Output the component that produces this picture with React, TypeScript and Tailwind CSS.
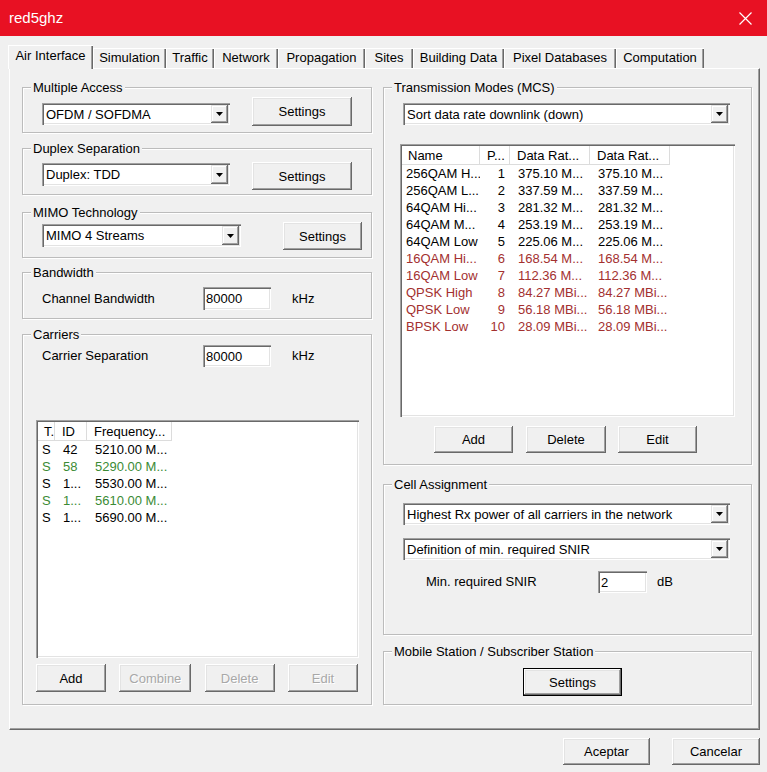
import React from 'react';

const sunken =
  'shadow-[inset_1px_1px_0_#a0a0a0,inset_2px_2px_0_#696969,inset_-1px_-1px_0_#ffffff,inset_-2px_-2px_0_#e3e3e3]';

function Btn({
  children,
  className = '',
  disabled = false,
  isDefault = false,
}: {
  children: React.ReactNode;
  className?: string;
  disabled?: boolean;
  isDefault?: boolean;
}) {
  return (
    <div
      className={`flex shrink-0 items-center justify-center bg-[#f0f0f0] text-[13px] leading-[15px] shadow-[inset_-1px_-1px_0_#696969,inset_1px_1px_0_#ffffff,inset_-2px_-2px_0_#a0a0a0,inset_2px_2px_0_#e3e3e3] ${
        disabled ? 'text-[#a8a8a8] [text-shadow:1px_1px_0_#ffffff]' : 'text-black'
      } ${isDefault ? 'outline outline-black' : ''} ${className}`}
    >
      {children}
    </div>
  );
}

function Combo({ value, className = '' }: { value: string; className?: string }) {
  return (
    <div className={`flex shrink-0 bg-white p-[2px] ${sunken} ${className}`}>
      <div className="flex flex-1 items-center overflow-hidden whitespace-nowrap pl-[2px] text-[13px] leading-[15px]">
        {value}
      </div>
      <div className="flex w-[17px] items-center justify-center bg-[#f0f0f0] shadow-[inset_-1px_-1px_0_#696969,inset_1px_1px_0_#e3e3e3,inset_-2px_-2px_0_#a0a0a0,inset_2px_2px_0_#ffffff]">
        <svg width="7" height="4" viewBox="0 0 7 4">
          <path d="M0 0h7L3.5 4z" fill="#000" />
        </svg>
      </div>
    </div>
  );
}

function Field({ value, className = '' }: { value: string; className?: string }) {
  return (
    <div className={`flex shrink-0 items-center bg-white pl-[3px] text-[13px] leading-[15px] ${sunken} ${className}`}>
      {value}
    </div>
  );
}

function Group({
  label,
  className = '',
  children,
}: {
  label: string;
  className?: string;
  children?: React.ReactNode;
}) {
  return (
    <div
      className={`shrink-0 border border-[#bcbcbc] shadow-[inset_1px_1px_0_#ffffff,1px_1px_0_#ffffff] ${className}`}
    >
      <div className="-mt-[8px] ml-[8px] w-fit bg-[#f0f0f0] px-[2px] text-[13px] leading-[15px]">{label}</div>
      {children}
    </div>
  );
}

type Col = { label: string; w: string; right?: boolean };
type Row = { cells: string[]; color: string };

function ListView({ cols, rows, className = '' }: { cols: Col[]; rows: Row[]; className?: string }) {
  return (
    <div className={`flex flex-col overflow-hidden bg-white p-[2px] ${sunken} ${className}`}>
      <div className="flex h-[19px] shrink-0 text-[13px] leading-[15px]">
        {cols.map((c, i) => (
          <div
            key={i}
            className={`flex h-full items-center overflow-hidden whitespace-nowrap border-r border-b border-[#dcdcdc] ${c.w} ${
              i === 0 ? 'pl-[6px]' : 'pl-[7px]'
            }`}
          >
            {c.label}
          </div>
        ))}
        <div className="h-full flex-1" />
      </div>
      {rows.map((r, ri) => (
        <div key={ri} className={`flex h-[17px] shrink-0 text-[13px] leading-[15px] ${r.color}`}>
          {r.cells.map((t, i) => (
            <div
              key={i}
              className={`flex h-full items-center overflow-hidden whitespace-nowrap ${cols[i].w} ${
                cols[i].right ? 'justify-end pr-[5px]' : i === 0 ? 'pl-[4px]' : 'pl-[8px]'
              }`}
            >
              {t}
            </div>
          ))}
        </div>
      ))}
    </div>
  );
}

const black = 'text-black';
const green = 'text-[#3b8b35]';
const red = 'text-[#a3302f]';

const carrierCols: Col[] = [
  { label: 'T.', w: 'w-[17px]' },
  { label: 'ID', w: 'w-[32px]' },
  { label: 'Frequency...', w: 'w-[85px]' },
];

const carrierRows: Row[] = [
  { cells: ['S', '42', '5210.00 M...'], color: black },
  { cells: ['S', '58', '5290.00 M...'], color: green },
  { cells: ['S', '1...', '5530.00 M...'], color: black },
  { cells: ['S', '1...', '5610.00 M...'], color: green },
  { cells: ['S', '1...', '5690.00 M...'], color: black },
];

const mcsCols: Col[] = [
  { label: 'Name', w: 'w-[78px]' },
  { label: 'P...', w: 'w-[30px]', right: true },
  { label: 'Data Rat...', w: 'w-[80px]' },
  { label: 'Data Rat...', w: 'w-[80px]' },
];

const mcsRows: Row[] = [
  { cells: ['256QAM H...', '1', '375.10 M...', '375.10 M...'], color: black },
  { cells: ['256QAM L...', '2', '337.59 M...', '337.59 M...'], color: black },
  { cells: ['64QAM Hi...', '3', '281.32 M...', '281.32 M...'], color: black },
  { cells: ['64QAM M...', '4', '253.19 M...', '253.19 M...'], color: black },
  { cells: ['64QAM Low', '5', '225.06 M...', '225.06 M...'], color: black },
  { cells: ['16QAM Hi...', '6', '168.54 M...', '168.54 M...'], color: red },
  { cells: ['16QAM Low', '7', '112.36 M...', '112.36 M...'], color: red },
  { cells: ['QPSK High', '8', '84.27 MBi...', '84.27 MBi...'], color: red },
  { cells: ['QPSK Low', '9', '56.18 MBi...', '56.18 MBi...'], color: red },
  { cells: ['BPSK Low', '10', '28.09 MBi...', '28.09 MBi...'], color: red },
];

const tabs = [
  { label: 'Air Interface', w: 'w-[85px]' },
  { label: 'Simulation', w: 'w-[73px]' },
  { label: 'Traffic', w: 'w-[48px]' },
  { label: 'Network', w: 'w-[64px]' },
  { label: 'Propagation', w: 'w-[87px]' },
  { label: 'Sites', w: 'w-[48px]' },
  { label: 'Building Data', w: 'w-[91px]' },
  { label: 'Pixel Databases', w: 'w-[112px]' },
  { label: 'Computation', w: 'w-[88px]' },
];

export default function App() {
  return (
    <div className="flex h-[772px] w-[767px] flex-col overflow-hidden bg-[#f0f0f0] font-['Liberation_Sans',Arial,sans-serif] text-[13px] text-black">
      {/* title bar */}
      <div className="flex h-[36px] shrink-0 items-center justify-between bg-[#e81123] pl-[9px] pr-[15px]">
        <span className="text-[15px] text-white">red5ghz</span>
        <svg width="13" height="13" viewBox="0 0 13 13">
          <path d="M0.5 0.5L12.5 12.5M12.5 0.5L0.5 12.5" stroke="#fff" strokeWidth="1.2" />
        </svg>
      </div>

      {/* tabs */}
      <div className="mt-[9px] flex h-[23px] items-end pl-[8px]">
        {tabs.map((t, i) =>
          i === 0 ? (
            <div
              key={t.label}
              className={`relative z-10 -mb-[1px] flex h-[24px] items-center justify-center bg-[#f0f0f0] pb-[2px] shadow-[inset_1px_1px_0_#ffffff,inset_-1px_0_0_#696969,inset_-2px_0_0_#a0a0a0] ${t.w}`}
            >
              {t.label}
            </div>
          ) : (
            <div
              key={t.label}
              className={`flex h-[20px] items-center justify-center bg-[#f0f0f0] shadow-[inset_1px_1px_0_#ffffff,inset_-1px_0_0_#696969,inset_-2px_0_0_#a0a0a0] ${t.w}`}
            >
              {t.label}
            </div>
          )
        )}
      </div>

      {/* tab panel */}
      <div className="ml-[9px] flex h-[662px] w-[751px] shrink-0 border border-t-white border-l-white border-r-[#696969] border-b-[#696969] shadow-[inset_-1px_-1px_0_#a0a0a0]">
        {/* left column */}
        <div className="flex flex-col pl-[12px] pt-[18px]">
          <Group label="Multiple Access" className="h-[46px] w-[350px]">
            <div className="mt-[2px] flex items-start pl-[19px]">
              <Combo value="OFDM / SOFDMA" className="mt-[6px] h-[22px] w-[188px]" />
              <Btn className="ml-[22px] h-[29px] w-[100px]">Settings</Btn>
            </div>
          </Group>

          <Group label="Duplex Separation" className="mt-[15px] h-[47px] w-[350px]">
            <div className="mt-[6px] flex items-start pl-[19px]">
              <Combo value="Duplex: TDD" className="mt-[1px] h-[23px] w-[188px]" />
              <Btn className="ml-[22px] h-[28px] w-[100px]">Settings</Btn>
            </div>
          </Group>

          <Group label="MIMO Technology" className="mt-[17px] h-[46px] w-[350px]">
            <div className="mt-[2px] flex items-start pl-[19px]">
              <Combo value="MIMO 4 Streams" className="mt-[2px] h-[23px] w-[199px]" />
              <Btn className="ml-[42px] h-[28px] w-[79px]">Settings</Btn>
            </div>
          </Group>

          <Group label="Bandwidth" className="mt-[14px] h-[47px] w-[350px]">
            <div className="mt-[7px] flex h-[23px] items-center pl-[19px]">
              <span className="w-[161px]">Channel Bandwidth</span>
              <Field value="80000" className="h-[23px] w-[68px]" />
              <span className="ml-[21px]">kHz</span>
            </div>
          </Group>

          <Group label="Carriers" className="mt-[15px] h-[371px] w-[350px]">
            <div className="mt-[3px] flex h-[22px] items-center pl-[19px]">
              <span className="w-[161px]">Carrier Separation</span>
              <Field value="80000" className="h-[22px] w-[68px]" />
              <span className="ml-[21px]">kHz</span>
            </div>
            <ListView cols={carrierCols} rows={carrierRows} className="ml-[13px] mt-[53px] h-[238px] w-[323px]" />
            <div className="ml-[13px] mt-[6px] flex w-[322px] justify-between">
              <Btn className="h-[28px] w-[70px]">Add</Btn>
              <Btn disabled className="h-[28px] w-[72px]">Combine</Btn>
              <Btn disabled className="h-[28px] w-[70px]">Delete</Btn>
              <Btn disabled className="h-[28px] w-[70px]">Edit</Btn>
            </div>
          </Group>
        </div>

        {/* right column */}
        <div className="ml-[11px] flex flex-col pt-[18px]">
          <Group label="Transmission Modes (MCS)" className="h-[378px] w-[369px]">
            <Combo value="Sort data rate downlink (down)" className="ml-[19px] mt-[8px] h-[22px] w-[327px]" />
            <ListView cols={mcsCols} rows={mcsRows} className="ml-[16px] mt-[19px] h-[273px] w-[335px]" />
            <div className="ml-[50px] mt-[9px] flex">
              <Btn className="h-[27px] w-[79px]">Add</Btn>
              <Btn className="ml-[13px] h-[27px] w-[80px]">Delete</Btn>
              <Btn className="ml-[12px] h-[27px] w-[79px]">Edit</Btn>
            </div>
          </Group>

          <Group label="Cell Assignment" className="mt-[19px] h-[151px] w-[369px]">
            <Combo
              value="Highest Rx power of all carriers in the network"
              className="ml-[19px] mt-[11px] h-[22px] w-[327px]"
            />
            <Combo value="Definition of min. required SNIR" className="ml-[19px] mt-[13px] h-[22px] w-[327px]" />
            <div className="mt-[11px] flex h-[22px] items-center pl-[42px]">
              <span className="w-[172px]">Min. required SNIR</span>
              <Field value="2" className="h-[22px] w-[49px]" />
              <span className="ml-[10px]">dB</span>
            </div>
          </Group>

          <Group label="Mobile Station / Subscriber Station" className="mt-[16px] h-[54px] w-[369px]">
            <Btn isDefault className="ml-[140px] mt-[10px] h-[26px] w-[97px]">
              Settings
            </Btn>
          </Group>
        </div>
      </div>

      {/* dialog buttons */}
      <div className="mt-[8px] flex justify-end gap-[22px] pr-[7px]">
        <Btn className="h-[27px] w-[87px]">Aceptar</Btn>
        <Btn className="h-[27px] w-[88px]">Cancelar</Btn>
      </div>
    </div>
  );
}
